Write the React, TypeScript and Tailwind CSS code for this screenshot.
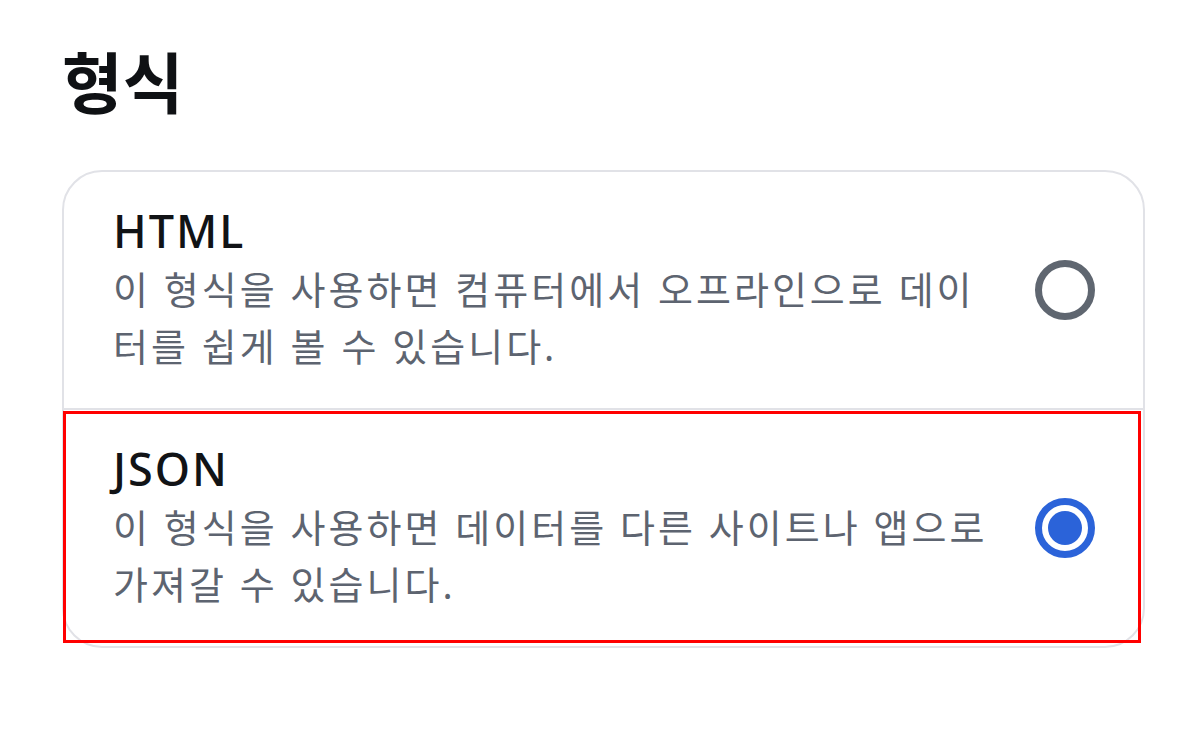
const FONT = { fontFamily: '"Noto Sans", "Noto Sans CJK KR", sans-serif' };

type Option = {
  id: string;
  title: string;
  lines: string[];
  selected: boolean;
};

const OPTIONS: Option[] = [
  {
    id: "html",
    title: "HTML",
    lines: ["이 형식을 사용하면 컴퓨터에서 오프라인으로 데이", "터를 쉽게 볼 수 있습니다."],
    selected: false,
  },
  {
    id: "json",
    title: "JSON",
    lines: ["이 형식을 사용하면 데이터를 다른 사이트나 앱으로", "가져갈 수 있습니다."],
    selected: true,
  },
];

function Radio({ checked }: { checked: boolean }) {
  if (checked) {
    return (
      <div className="flex h-[60px] w-[60px] flex-none items-center justify-center rounded-full border-[7px] border-[#2b63d9]">
        <div className="h-[34px] w-[34px] rounded-full bg-[#2b63d9]" />
      </div>
    );
  }
  return <div className="h-[60px] w-[60px] flex-none rounded-full border-[7px] border-[#5f6670]" />;
}

function OptionRow({ option }: { option: Option }) {
  return (
    <div className="flex h-[236px] items-center justify-between pl-[49px] pr-[48px]">
      <div>
        <div className="text-[45px] font-medium leading-[52px] tracking-[2px] text-[#111316]">{option.title}</div>
        <div className="mt-[4px] text-[38px] leading-[57px] tracking-[3px] text-[#5d6470]">
          {option.lines.map((line) => (
            <div key={line} className="whitespace-nowrap">
              {line}
            </div>
          ))}
        </div>
      </div>
      <Radio checked={option.selected} />
    </div>
  );
}

export default function App() {
  return (
    <div className="h-[739px] w-full overflow-hidden bg-white px-[62px] pt-[45px]" style={FONT}>
      <h1 className="text-[66px] font-bold leading-[74px] text-[#0f1114]">형식</h1>

      <div className="relative mt-[51px] w-[1083px] rounded-[40px] border-2 border-[#e1e2e7]">
        <OptionRow option={OPTIONS[0]} />
        <div className="h-[2px] bg-[#e1e2e7]" />
        <OptionRow option={OPTIONS[1]} />

        {/* highlight box around the selected option */}
        <div className="pointer-events-none absolute left-[-1px] top-[239px] h-[232px] w-[1078px] border-[3px] border-[#ff0000]" />
      </div>
    </div>
  );
}
